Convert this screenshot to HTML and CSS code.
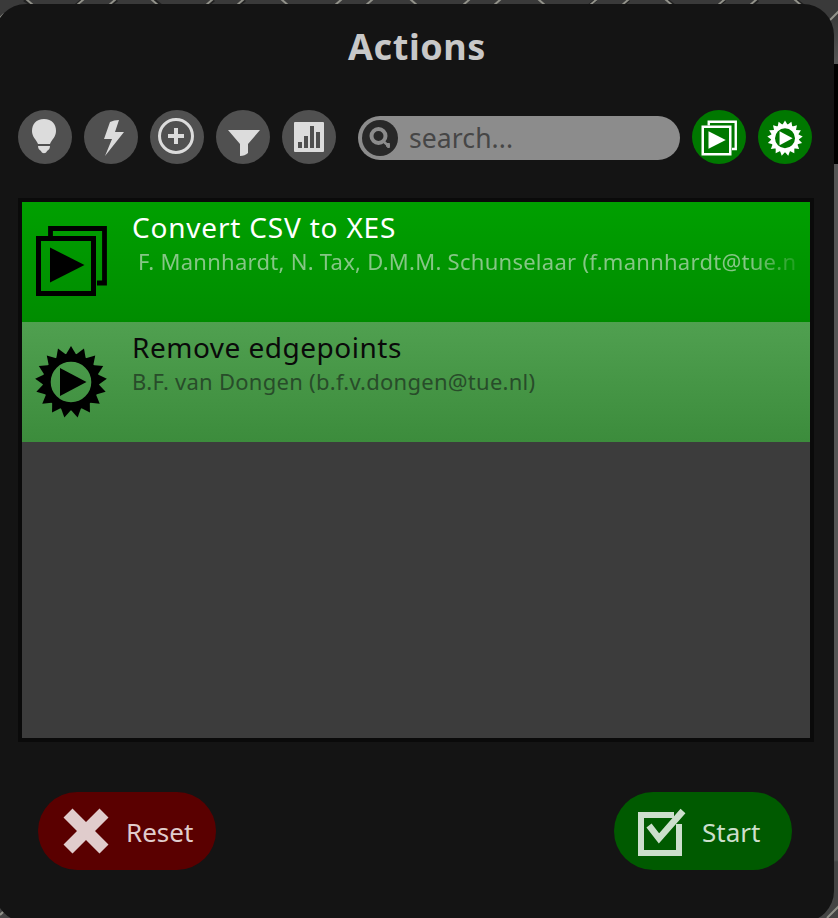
FILE: index.html
```html
<!DOCTYPE html>
<html lang="en">
<head>
<meta charset="utf-8">
<title>Actions</title>
<link rel="stylesheet" href="styles.css">
</head>
<body>
<svg class="defs" width="0" height="0">
  <symbol id="stack" viewBox="0 0 72 72">
    <path d="M15.500 11V3.500H69.500V58H62" fill="none" stroke="currentColor" stroke-width="4.800"/>
    <rect x="3.500" y="13.500" width="55" height="55" fill="none" stroke="currentColor" stroke-width="5"/>
    <path d="M15 22.500V57.500L49.500 40Z" fill="currentColor"/>
  </symbol>
  <symbol id="gear" viewBox="0 0 72 73">
    <path id="tooth" d="M30 11L36 1L42 11Z" fill="currentColor"/>
    <use href="#tooth" transform="rotate(21.176 36 37)"/>
    <use href="#tooth" transform="rotate(42.353 36 37)"/>
    <use href="#tooth" transform="rotate(63.529 36 37)"/>
    <use href="#tooth" transform="rotate(84.706 36 37)"/>
    <use href="#tooth" transform="rotate(105.882 36 37)"/>
    <use href="#tooth" transform="rotate(127.059 36 37)"/>
    <use href="#tooth" transform="rotate(148.235 36 37)"/>
    <use href="#tooth" transform="rotate(169.412 36 37)"/>
    <use href="#tooth" transform="rotate(190.588 36 37)"/>
    <use href="#tooth" transform="rotate(211.765 36 37)"/>
    <use href="#tooth" transform="rotate(232.941 36 37)"/>
    <use href="#tooth" transform="rotate(254.118 36 37)"/>
    <use href="#tooth" transform="rotate(275.294 36 37)"/>
    <use href="#tooth" transform="rotate(296.471 36 37)"/>
    <use href="#tooth" transform="rotate(317.647 36 37)"/>
    <use href="#tooth" transform="rotate(338.824 36 37)"/>
    <circle cx="36" cy="37" r="24.300" fill="none" stroke="currentColor" stroke-width="8"/>
    <path d="M25 23V51L51.500 37Z" fill="currentColor"/>
  </symbol>
</svg>
<div class="desktop">
  <svg class="texture" width="838" height="918" aria-hidden="true">
    <g class="ridge-shadow"><path d="M24 0l8 5M82 0l-7 6M117 0l-9 7M154 0l8 6M214 0l-9 7M245 0l-8 6M596 0l-9 7M629 0l-7 6M667 0l8 6M725 0l-9 7M758 0l-7 6M796 0l8 6"/></g>
    <g class="ridge"><path d="M26 -1l7 6M84 -1l-8 7M116 -1l-8 7M151 -1l8 7M213 -1l-8 7M244 -1l-8 7M281 -1l8 7M342 -1l-8 7M373 -1l-8 7M410 -1l8 7M470 -1l-8 7M501 -1l-8 7M538 -1l8 7M597 -1l-8 7M629 -1l-8 7M665 -1l8 7M725 -1l-8 7M757 -1l-8 7M794 -1l8 7M839 11l-9 9M0 915l5 -5M839 906l-12 12M-1 19l5 -5"/></g>
  </svg>
  <main class="panel">
    <h1 class="title">Actions</h1>
    <div class="toolbar">
      <div class="filters">
        <button class="round" aria-label="Ideas"><svg viewBox="0 0 54 54"><path d="M26 9c-8 0-12 5-12 12 0 6 4 8 6 13h12c2-5 6-7 6-13 0-7-4-12-12-12zM20 36h12c0 2-1 4-3 5-1 3-5 3-6 0-2-1-3-3-3-5z"/></svg></button>
        <button class="round" aria-label="Flash"><svg viewBox="0 0 54 54"><path d="M26 12q4-2 9-2l-4 12h9L21 46l7-17h-8z"/></svg></button>
        <button class="round" aria-label="Add"><svg viewBox="0 0 54 54"><circle class="line" cx="26" cy="26" r="16.500"/><path d="M24 18h4v6h6v4h-6v6h-4v-6h-6v-4h6z"/></svg></button>
        <button class="round" aria-label="Filter"><svg viewBox="0 0 54 54"><path d="M12 20h32L32 34v9q-3 3-8 3V34z"/></svg></button>
        <button class="round" aria-label="Chart"><svg viewBox="0 0 54 54"><rect x="12" y="12" width="30" height="30" rx="1"/><path class="bars" d="M16 32h4v6h-4zM22 26h4v12h-4zM28 16h4v22h-4zM34 22h4v16h-4z"/></svg></button>
      </div>
      <label class="search">
        <svg class="search-icon" viewBox="0 0 36 36"><circle class="disc" cx="18" cy="18" r="18"/><circle class="lens" cx="16.500" cy="16" r="7"/><path class="handle" d="M21 21l5 4.500M24 25.500h4M26.500 23v5"/></svg>
        <span class="search-text">search...</span>
      </label>
      <div class="modes">
        <button class="round green" aria-label="Multiple"><svg class="mode-icon stack-icon"><use href="#stack"/></svg></button>
        <button class="round green" aria-label="Plugins"><svg class="mode-icon gear-icon"><use href="#gear"/></svg></button>
      </div>
    </div>
    <ul class="list">
      <li class="item selected">
        <svg class="item-icon"><use href="#stack"/></svg>
        <div class="info">
          <div class="name"><span class="name-one">Convert CSV to XES</span></div>
          <div class="author author-one">F. Mannhardt, N. Tax, D.M.M. Schunselaar (f.mannhardt@tue.nl)</div>
        </div>
      </li>
      <li class="item">
        <svg class="item-icon gear-large"><use href="#gear"/></svg>
        <div class="info">
          <div class="name"><span class="name-two">Remove edgepoints</span></div>
          <div class="author author-two">B.F. van Dongen (b.f.v.dongen@tue.nl)</div>
        </div>
      </li>
    </ul>
    <div class="footer">
      <button class="pill reset"><svg class="pill-icon" viewBox="0 0 48 48"><path d="M10.500 1.500L24 15 37.500 1.500l9 9L33 24l13.500 13.500-9 9L24 33 10.500 46.500l-9-9L15 24 1.500 10.500z"/></svg><span>Reset</span></button>
      <button class="pill start"><svg class="pill-icon" viewBox="0 0 48 48"><path class="box" d="M38 8H5v38h38V17"/><path class="tick" d="M13 18.500l10 13L47 4"/></svg><span>Start</span></button>
    </div>
  </main>
</div>
</body>
</html>
```
FILE: styles.css
```css
* { box-sizing: border-box; }
body { margin: 0; font-family: "Noto Sans", "Open Sans", sans-serif; }
button { border: 0; padding: 0; font: inherit; }
.defs { position: absolute; }
.desktop {
  position: relative;
  width: 838px;
  height: 918px;
  overflow: hidden;
  background: linear-gradient(#3a3a3a 0 16px, #555 64px, #000 64px 164px, #555 164px 860px, #444 862px);
}
.texture { position: absolute; inset: 0; }
.ridge { fill: none; stroke: #92928a; stroke-width: 2; }
.ridge-shadow { stroke: #222; stroke-width: 3; }
.panel {
  position: relative;
  width: 839px;
  height: 918px;
  margin: 4px 0 0 -5px;
  padding: 0 20px 0 23px;
  border-radius: 31px;
  background: #141414;
}
.title {
  height: 106px;
  margin: 0;
  padding: 18px 0 0 2px;
  color: #c8c8c8;
  font-size: 36px;
  font-weight: 700;
  line-height: 50px;
  text-align: center;
  letter-spacing: .6px;
}
.toolbar { display: flex; align-items: center; height: 54px; padding-right: 2px; }
.filters, .modes { display: flex; gap: 12px; }
.round { display: flex; width: 54px; height: 54px; border-radius: 50%; background: #505050; }
.round svg { width: 54px; height: 54px; fill: #dcdcdc; }
.round .line { fill: none; stroke: #dcdcdc; stroke-width: 3; }
.round .bars { fill: #505050; }
.round.green { background: #007800; color: #fff; }
.round .mode-icon { width: 36px; height: 36px; }
.round .stack-icon { margin: 10px 0 0 9px; }
.round .gear-icon { margin: 10px 0 0 9px; }
.search {
  display: flex;
  align-items: center;
  width: 322px;
  height: 44px;
  margin: 2px 12px 0 22px;
  padding-left: 4px;
  border-radius: 22px;
  background: #8c8c8c;
}
.search-icon { width: 36px; height: 36px; }
.disc { fill: #282828; }
.lens { fill: none; stroke: #8c8c8c; stroke-width: 4; }
.handle { fill: none; stroke: #8c8c8c; stroke-width: 2.5; }
.search-text { margin: 0 0 1px 11px; color: #464646; font-size: 26.5px; line-height: 40px; letter-spacing: .1px; }
.list {
  height: 544px;
  margin: 34px 0 0;
  padding: 0;
  border: 4px solid #0a0a0a;
  background: #3c3c3c;
  list-style: none;
}
.item {
  display: flex;
  gap: 25px;
  height: 120px;
  padding: 0 12px 0 13px;
  color: #000;
  background: linear-gradient(#50a050, #3c8c3c);
}
.item.selected { background: linear-gradient(#00a000, #008c00); }
.item-icon { flex: none; width: 72px; height: 72px; margin-top: 23px; }
.gear-large { height: 73px; }
.info { min-width: 0; flex: 1; padding-top: 6px; white-space: nowrap; overflow: hidden; }
.name { height: 37px; font-size: 28px; line-height: 38px; color: #0a0a0a; }
.selected .name { color: #fff; }
.name-one { letter-spacing: .8px; }
.name-two { letter-spacing: .5px; }
.author { overflow: hidden; height: 32px; font-size: 22px; line-height: 32px; color: #284c2a; }
.author-one {
  margin-left: 6px;
  color: #86c686;
  letter-spacing: .27px;
  -webkit-mask-image: linear-gradient(90deg, #000 calc(100% - 48px), #0003);
  mask-image: linear-gradient(90deg, #000 calc(100% - 48px), #0003);
}
.author-two { letter-spacing: .27px; }
.footer { display: flex; justify-content: space-between; padding: 50px 22px 0 20px; }
.pill {
  display: flex;
  align-items: center;
  width: 178px;
  height: 78px;
  padding-left: 24px;
  border-radius: 39px;
  font-size: 26px;
}
.pill-icon { width: 48px; height: 48px; overflow: visible; }
.pill span { margin: 2px 0 0 16px; }
.reset { background: #5a0000; color: #e0cccc; }
.start { background: #005a00; color: #ccdfcc; padding-left: 22px; }
.start span { margin-left: 18px; }
.reset path { fill: #e0cccc; }
.start path { fill: none; stroke: #ccdfcc; }
.start .box { stroke-width: 6; }
.start .tick { stroke-width: 6.5; }
```
